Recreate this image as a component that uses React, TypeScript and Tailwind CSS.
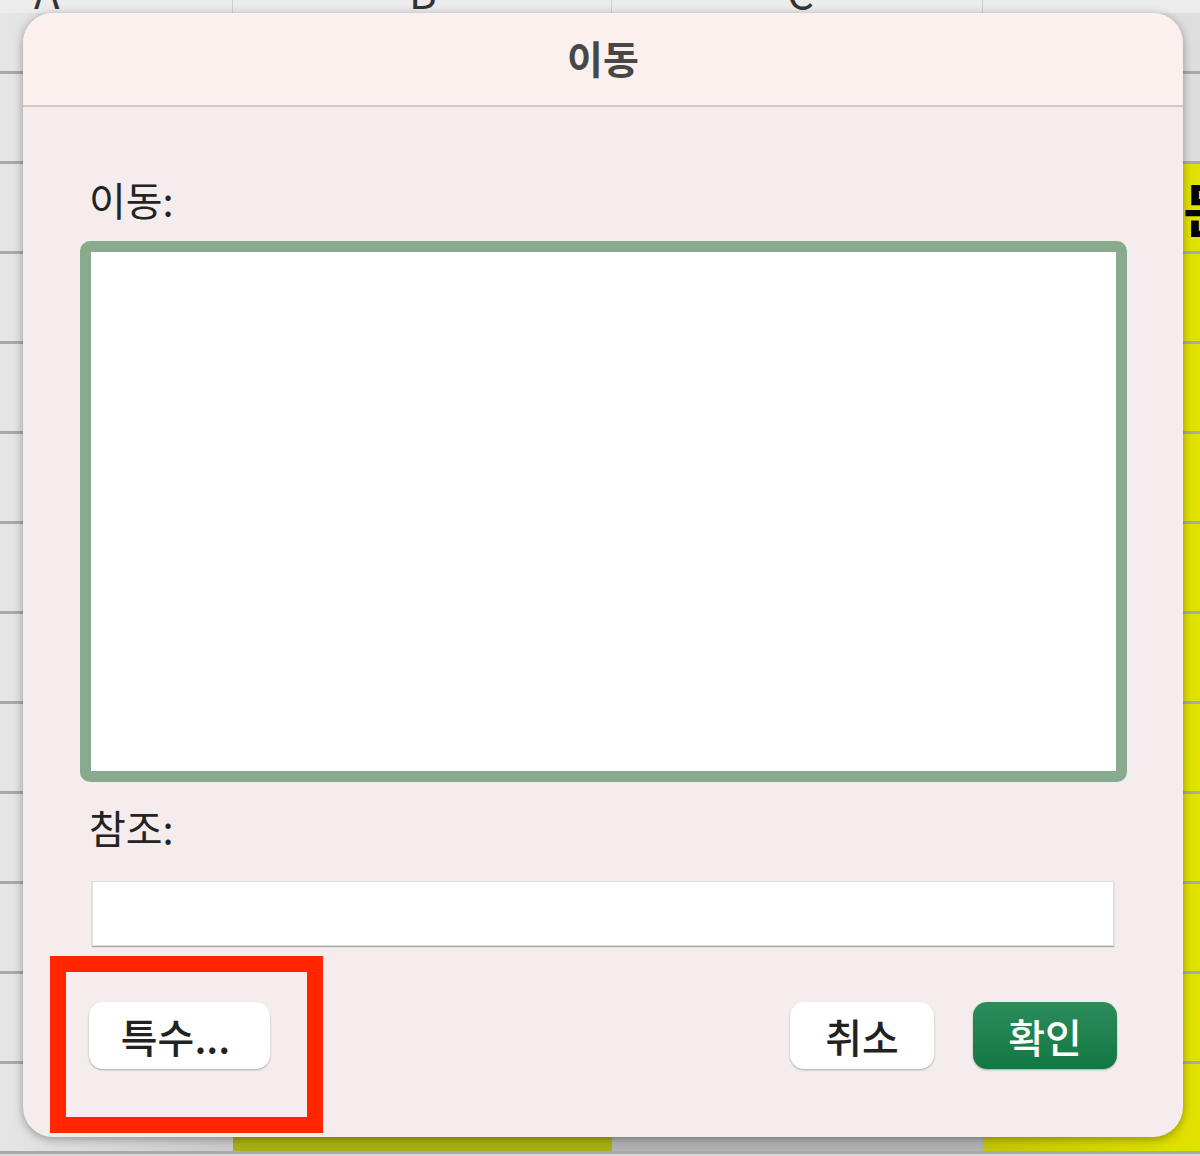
const ROWS = [61, 90, 90, 90, 90, 90, 90, 90, 90, 90, 90, 90, 90];

function Sheet() {
    return (
        <div className="absolute inset-0 bg-[#d9d9d9]">
            {/* column header strip, letters cut off by the top edge */}
            <div className="flex h-[13px] bg-[#ececec] overflow-hidden">
                <div className="w-[233px] border-r border-[#d0d0d0] relative">
                    <span className="absolute left-[34px] -top-[30px] text-[42px] text-[#333] leading-none">A</span>
                </div>
                <div className="w-[379px] border-r border-[#d0d0d0] relative">
                    <span className="absolute left-[176px] -top-[30px] text-[42px] text-[#333] leading-none">B</span>
                </div>
                <div className="w-[371px] border-r border-[#d0d0d0] relative">
                    <span className="absolute left-[175px] -top-[30px] text-[42px] text-[#333] leading-none">C</span>
                </div>
                <div className="flex-1" />
            </div>
            {/* rows */}
            <div className="flex flex-col">
                {ROWS.map((h, i) => (
                    <div key={i} className="flex border-b-[3px] border-[#a9a9a9]" style={{ height: h }}>
                        <div className="w-[233px] bg-gradient-to-r from-[#e6e6e6] to-[#c9c9c9]" />
                        <div className={i === 12 ? 'w-[379px] bg-[#a9b012]' : 'w-[379px] bg-[#cfcfcf]'} />
                        <div className="w-[371px] bg-[#b2b2b2]" />
                        <div
                            className={
                                i >= 2
                                    ? 'flex-1 bg-gradient-to-r from-[#c4c600] to-[#e2e200] relative overflow-hidden'
                                    : 'flex-1 bg-[#dedede]'
                            }
                        >
                            {i === 2 && (
                                <span className="absolute left-[200px] top-[14px] text-[58px] font-bold text-black leading-none">
                                    든
                                </span>
                            )}
                        </div>
                    </div>
                ))}
            </div>
        </div>
    );
}

export default function App() {
    return (
        <div
            className="relative w-[1200px] h-[1156px] overflow-hidden"
            style={{ fontFamily: '"Noto Sans CJK KR", "Noto Sans", sans-serif' }}
        >
            <Sheet />

            {/* Dialog */}
            <div className="absolute left-[23px] top-[13px] w-[1160px] h-[1124px] rounded-[30px] bg-[#f5eded] shadow-[0_2px_10px_rgba(0,0,0,0.35)] overflow-hidden flex flex-col">
                <div className="h-[94px] shrink-0 bg-[#fbf0ee] border-b-2 border-[#cfc9c8] flex items-center justify-center">
                    <span className="text-[39px] font-bold text-[#474747] leading-none -mt-[4px]">이동</span>
                </div>

                <div className="flex flex-col">
                    <div className="mt-[68px] ml-[66px] h-[48px] text-[40px] leading-[48px] text-[#232323]">이동:</div>

                    <div className="mt-[18px] ml-[57px] w-[1047px] h-[541px] bg-white border-[11px] border-[#87ab8c] rounded-[10px]" />

                    <div className="mt-[21px] ml-[66px] h-[48px] text-[40px] leading-[48px] text-[#232323]">참조:</div>

                    <div className="mt-[30px] ml-[69px] w-[1022px] h-[65px] bg-white border border-[#e2dddd] shadow-[0_1px_1px_rgba(0,0,0,0.3)]" />

                    <div className="mt-[56px] mx-[66px] flex items-center">
                        <button className="w-[181px] h-[67px] rounded-[14px] bg-white shadow-[0_1px_2px_rgba(0,0,0,0.3)] text-[40px] font-medium text-[#222] leading-none pr-[8px]">
                            특수...
                        </button>
                        <div className="flex-1" />
                        <div className="flex gap-[39px]">
                            <button className="w-[144px] h-[67px] rounded-[14px] bg-white shadow-[0_1px_2px_rgba(0,0,0,0.3)] text-[40px] font-medium text-[#222] leading-none">
                                취소
                            </button>
                            <button className="w-[144px] h-[67px] rounded-[14px] bg-gradient-to-b from-[#2c8c5c] to-[#117842] shadow-[0_1px_2px_rgba(0,0,0,0.3)] text-[40px] font-medium text-white leading-none">
                                확인
                            </button>
                        </div>
                    </div>
                </div>
            </div>

            {/* annotation */}
            <div className="absolute left-[50px] top-[956px] w-[273px] h-[177px] border-[16px] border-[#ff2600]" />
        </div>
    );
}
